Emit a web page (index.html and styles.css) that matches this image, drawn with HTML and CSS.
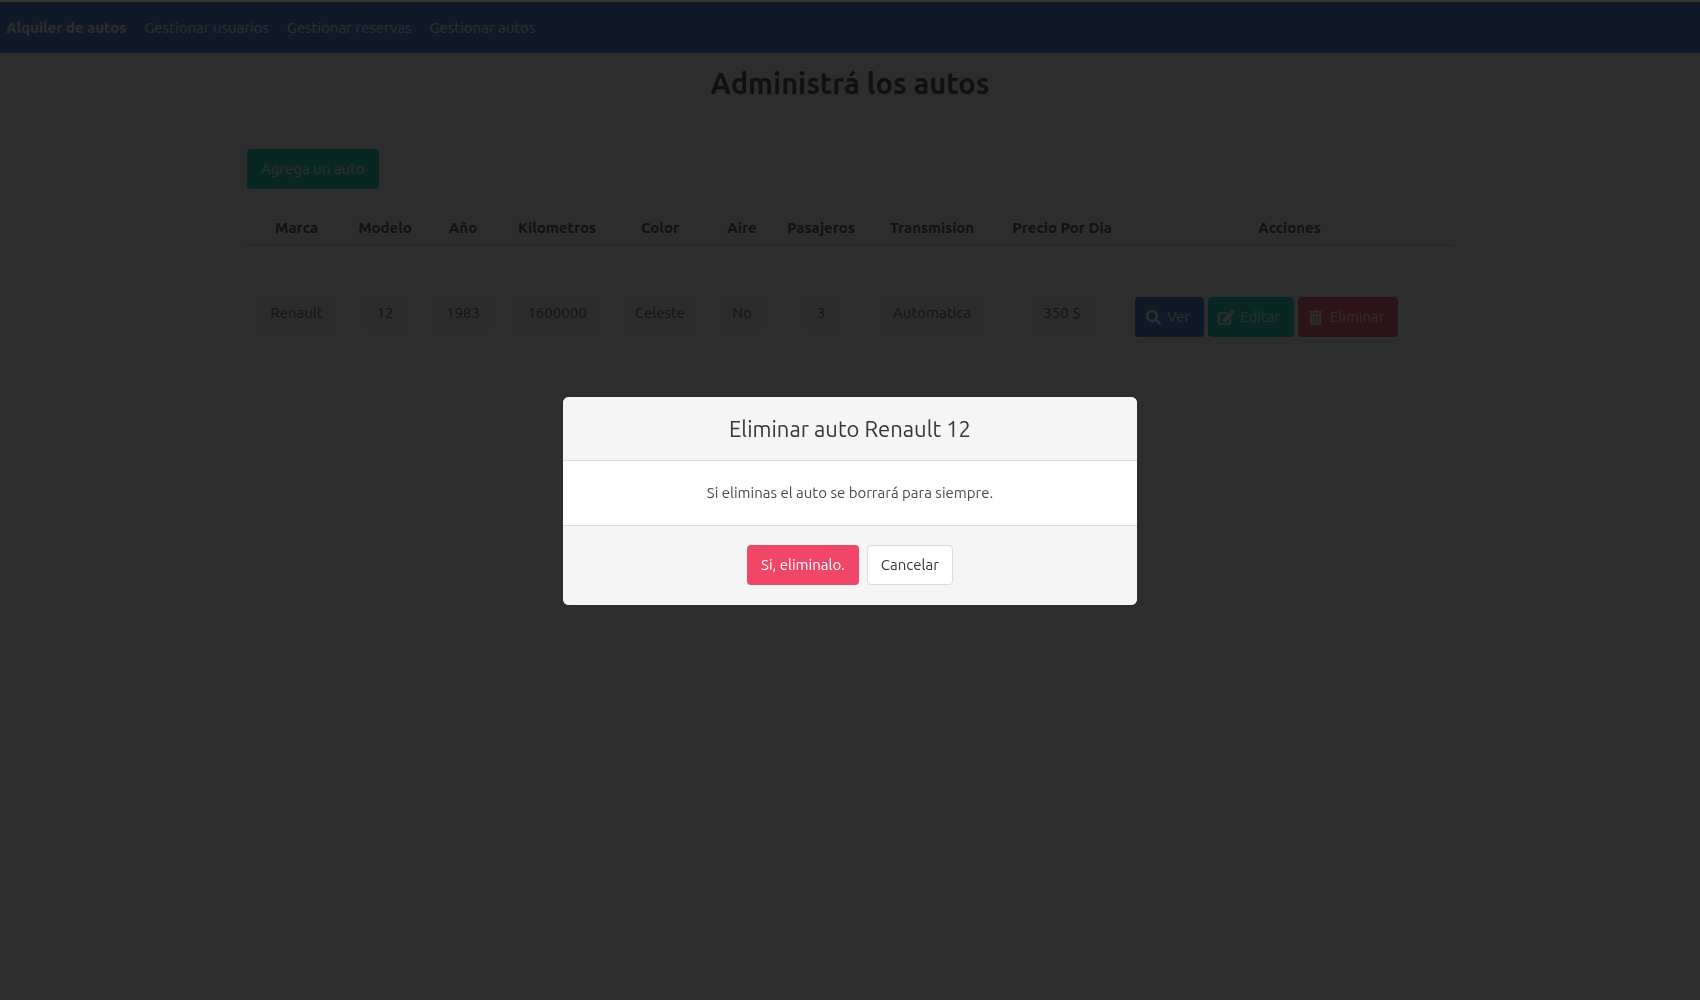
FILE: index.html
```html
<!DOCTYPE html>
<html lang="es">
<head>
  <meta charset="utf-8">
  <meta name="viewport" content="width=device-width, initial-scale=1">
  <title>Administrá los autos</title>
  <link rel="stylesheet" href="styles.css">
</head>
<body>
  <nav class="navbar" aria-label="Principal">
    <a class="navbar-item navbar-brand" href="#">Alquiler de autos</a>
    <a class="navbar-item" href="#">Gestionar usuarios</a>
    <a class="navbar-item" href="#">Gestionar reservas</a>
    <a class="navbar-item" href="#">Gestionar autos</a>
  </nav>

  <h1 class="title">Administrá los autos</h1>

  <main class="container">
    <button class="button is-primary" type="button">Agrega un auto</button>

    <table class="table">
      <colgroup>
        <col class="col-marca">
        <col class="col-modelo">
        <col class="col-anio">
        <col class="col-kilometros">
        <col class="col-color">
        <col class="col-aire">
        <col class="col-pasajeros">
        <col class="col-transmision">
        <col class="col-precio">
        <col>
      </colgroup>
      <thead>
        <tr>
          <th scope="col">Marca</th>
          <th scope="col">Modelo</th>
          <th scope="col">Año</th>
          <th scope="col">Kilometros</th>
          <th scope="col">Color</th>
          <th scope="col">Aire</th>
          <th scope="col">Pasajeros</th>
          <th scope="col">Transmision</th>
          <th scope="col">Precio Por Dia</th>
          <th scope="col">Acciones</th>
        </tr>
      </thead>
      <tbody>
        <tr>
          <td><span class="tag">Renault</span></td>
          <td><span class="tag">12</span></td>
          <td><span class="tag">1983</span></td>
          <td><span class="tag">1600000</span></td>
          <td><span class="tag">Celeste</span></td>
          <td><span class="tag">No</span></td>
          <td><span class="tag">3</span></td>
          <td><span class="tag">Automatica</span></td>
          <td><span class="tag">350 $</span></td>
          <td>
            <div class="actions">
              <button class="button has-icon is-link" type="button">
                <span class="icon"><svg viewBox="0 0 512 512" aria-hidden="true"><path d="M505 442.7L405.3 343c-4.5-4.5-10.6-7-17-7H372c27.6-35.3 44-79.7 44-128C416 93.1 322.9 0 208 0S0 93.1 0 208s93.1 208 208 208c48.3 0 92.7-16.4 128-44v16.3c0 6.4 2.5 12.5 7 17l99.7 99.7c9.4 9.4 24.6 9.4 33.9 0l28.3-28.3c9.4-9.4 9.4-24.6.1-34zM208 336c-70.7 0-128-57.2-128-128 0-70.7 57.2-128 128-128 70.7 0 128 57.2 128 128 0 70.7-57.2 128-128 128z"/></svg></span>
                <span>Ver</span>
              </button>
              <button class="button has-icon is-primary" type="button">
                <span class="icon"><svg viewBox="0 0 576 512" aria-hidden="true"><path d="M402.6 83.2l90.2 90.2c3.8 3.8 3.8 10 0 13.8L274.4 405.6l-92.8 10.3c-12.4 1.4-22.9-9.1-21.5-21.5l10.3-92.8L388.8 83.2c3.8-3.8 10-3.8 13.8 0zm162-22.9l-48.8-48.8c-15.2-15.2-39.9-15.2-55.2 0l-35.4 35.4c-3.8 3.8-3.8 10 0 13.8l90.2 90.2c3.8 3.8 10 3.8 13.8 0l35.4-35.4c15.2-15.3 15.2-40 0-55.2zM384 346.2V448H64V128h229.8c3.2 0 6.2-1.3 8.5-3.5l40-40c7.6-7.6 2.2-20.5-8.5-20.5H48C21.5 64 0 85.5 0 112v352c0 26.5 21.5 48 48 48h352c26.5 0 48-21.5 48-48V306.2c0-10.7-12.9-16-20.5-8.5l-40 40c-2.2 2.3-3.5 5.3-3.5 8.5z"/></svg></span>
                <span>Editar</span>
              </button>
              <button class="button has-icon is-danger" type="button">
                <span class="icon"><svg viewBox="0 0 448 512" aria-hidden="true"><path d="M32 464a48 48 0 0 0 48 48h288a48 48 0 0 0 48-48V128H32zm272-256a16 16 0 0 1 32 0v224a16 16 0 0 1-32 0zm-96 0a16 16 0 0 1 32 0v224a16 16 0 0 1-32 0zm-96 0a16 16 0 0 1 32 0v224a16 16 0 0 1-32 0zM432 32H312l-9.4-18.7A24 24 0 0 0 281.1 0H166.8a23.7 23.7 0 0 0-21.4 13.3L136 32H16A16 16 0 0 0 0 48v32a16 16 0 0 0 16 16h416a16 16 0 0 0 16-16V48a16 16 0 0 0-16-16z"/></svg></span>
                <span>Eliminar</span>
              </button>
            </div>
          </td>
        </tr>
      </tbody>
    </table>
  </main>

  <div class="modal">
    <section class="modal-card" role="dialog" aria-modal="true" aria-labelledby="modal-title">
      <header class="modal-head">
        <h2 class="modal-title" id="modal-title">Eliminar auto Renault 12</h2>
      </header>
      <p class="modal-body">Si eliminas el auto se borrará para siempre.</p>
      <footer class="modal-foot">
        <button class="button is-danger" type="button">Si, eliminalo.</button>
        <button class="button" type="button">Cancelar</button>
      </footer>
    </section>
  </div>
</body>
</html>
```
FILE: styles.css
```css
*,
*::before,
*::after {
  box-sizing: border-box;
}

body {
  margin: 0;
  padding-top: 2px;
  background: #fff;
  color: #4a4a4a;
  font-family: Ubuntu, "Noto Sans", sans-serif;
  font-size: 15px;
  line-height: 24px;
}

h1,
h2,
p {
  margin: 0;
}

/* Navigation */

.navbar {
  display: flex;
  align-items: center;
  gap: 18px;
  min-height: 51px;
  padding: 0 6px;
  background: #3273dc;
}

.navbar-item {
  color: #fff;
  text-decoration: none;
}

.navbar-brand {
  font-weight: 700;
}

/* Page */

.title {
  padding: 12px 16px;
  color: #363636;
  font-size: 29px;
  font-weight: 700;
  line-height: 36px;
  text-align: center;
}

.container {
  max-width: 1206px;
  margin: 36px auto 0;
}

.button {
  display: inline-flex;
  align-items: center;
  justify-content: center;
  height: 40px;
  padding: 0 13px;
  border: 1px solid #dbdbdb;
  border-radius: 4px;
  background: #fff;
  color: #363636;
  font: inherit;
  white-space: nowrap;
  cursor: pointer;
}

.is-primary,
.is-link,
.is-danger {
  border-color: transparent;
  background-clip: border-box;
  color: #fff;
}

.is-primary {
  background-color: #00d1b2;
}

.is-link {
  background-color: #3273dc;
}

.is-danger {
  background-color: #f14668;
}

.has-icon {
  gap: 2px;
  padding-left: 5px;
}

.icon {
  display: inline-flex;
  align-items: center;
  justify-content: center;
  width: 24px;
  height: 24px;
}

.icon svg {
  height: 15px;
  fill: currentColor;
}

/* Cars table */

.table {
  width: 100%;
  margin-top: 16px;
  border-collapse: collapse;
  table-layout: fixed;
  text-align: center;
}

.table th {
  padding: 11px 0 4px;
  border-bottom: 2px solid #dbdbdb;
  color: #363636;
  font-weight: 700;
}

.table td {
  padding: 51px 0 8px;
  vertical-align: top;
}

.col-marca { width: 99px; }
.col-modelo { width: 78px; }
.col-anio { width: 78px; }
.col-kilometros { width: 110px; }
.col-color { width: 96px; }
.col-aire { width: 68px; }
.col-pasajeros { width: 90px; }
.col-transmision { width: 132px; }
.col-precio { width: 128px; }

.tag {
  display: inline-flex;
  align-items: center;
  height: 32px;
  padding: 0 10px;
  border-radius: 4px;
  background: #f5f5f5;
  vertical-align: top;
}

.actions {
  display: flex;
  gap: 4px;
  padding-left: 9px;
}

/* Confirmation dialog */

.modal {
  position: fixed;
  inset: 0;
  display: flex;
  align-items: center;
  justify-content: center;
  border-top: 2px solid #353333;
  background: rgba(10, 10, 10, 0.86);
  background-clip: padding-box;
}

.modal-card {
  width: 574px;
  max-width: 90%;
  overflow: hidden;
  border-radius: 6px;
  background: #fff;
  text-align: center;
}

.modal-head {
  padding: 18px 20px;
  border-bottom: 1px solid #dbdbdb;
  background: #f5f5f5;
}

.modal-title {
  color: #363636;
  font-size: 22px;
  font-weight: 400;
  line-height: 27px;
}

.modal-body {
  padding: 20px;
}

.modal-foot {
  display: flex;
  justify-content: center;
  gap: 8px;
  padding: 19px 20px 20px;
  border-top: 1px solid #dbdbdb;
  background: #f5f5f5;
}
```
